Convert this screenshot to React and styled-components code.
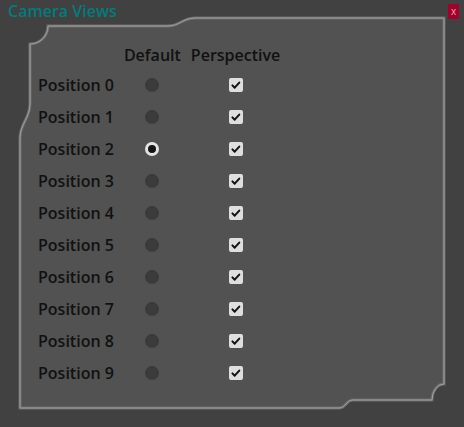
import React from "react";
import styled, { createGlobalStyle } from "styled-components";

const GlobalStyle = createGlobalStyle`
  html, body {
    margin: 0;
    padding: 0;
    background: #414141;
  }
  body {
    font-family: "Open Sans", "Noto Sans", sans-serif;
  }
`;

const Window = styled.div`
  position: relative;
  width: 464px;
  height: 427px;
  background: #414141;
  overflow: hidden;
`;

const Frame = styled.svg`
  position: absolute;
  inset: 0;
  z-index: 0;
`;

const TitleBar = styled.div`
  position: relative;
  z-index: 1;
  display: flex;
  justify-content: space-between;
  align-items: flex-start;
  height: 22px;
  padding: 0 5px 0 8px;
`;

const Title = styled.div`
  font-size: 16px;
  font-weight: 600;
  line-height: 22px;
  color: #007d7d;
`;

const CloseButton = styled.button`
  margin-top: 4px;
  width: 11px;
  height: 15px;
  padding: 0;
  border: none;
  background: #a3002b;
  color: #f2a8b8;
  font-family: "Open Sans", sans-serif;
  font-size: 10px;
  line-height: 13px;
  cursor: pointer;
`;

const Table = styled.div`
  position: relative;
  z-index: 1;
  display: grid;
  grid-template-columns: auto auto auto;
  grid-template-rows: 28px repeat(10, 32px);
  column-gap: 10px;
  align-items: center;
  width: max-content;
  margin: 19px 0 0 38px;
`;

const Header = styled.div`
  font-size: 16px;
  font-weight: 600;
  line-height: 22px;
  color: #111;
  justify-self: center;
`;

const Label = styled.div`
  font-size: 16px;
  font-weight: 600;
  line-height: 22px;
  color: #111;
`;

const Radio = styled.div`
  justify-self: center;
  width: 14px;
  height: 14px;
  border-radius: 50%;
  box-sizing: border-box;
  background: ${(p) => (p.$checked ? "#151515" : "#3b3b3b")};
  border: ${(p) => (p.$checked ? "3px solid #e4e4e4" : "none")};
`;

const Check = styled.div`
  justify-self: center;
  width: 14px;
  height: 14px;
  border-radius: 2px;
  background: #dedede;
  display: flex;
  align-items: center;
  justify-content: center;
`;

const rows = Array.from({ length: 10 }, (_, i) => ({
  name: `Position ${i}`,
  isDefault: i === 2,
  perspective: true,
}));

const outline =
  "M48 26 L168 26 C180 26 182 18 196 18 L444 18 L444 384 A12 16 0 0 0 432 400 " +
  "L353 400 C346 400 346 408 339 408 L20 408 L20 138 C20 124 30 118 30 104 " +
  "L30 44 A18 18 0 0 0 48 26 Z";

function PanelFrame() {
  return (
    <Frame width="464" height="427" viewBox="0 0 464 427">
      <path d={outline} fill="#525252" stroke="#6c6c6c" strokeWidth="3" />
      <path d={outline} fill="none" stroke="#a2a2a2" strokeWidth="1" />
    </Frame>
  );
}

function CheckMark() {
  return (
    <svg width="14" height="14" viewBox="0 0 14 14">
      <path
        d="M3.4 7.4 L5.7 9.7 L10.3 4.6"
        fill="none"
        stroke="#111"
        strokeWidth="2"
        strokeLinecap="round"
        strokeLinejoin="round"
      />
    </svg>
  );
}

export default function App() {
  return (
    <>
      <GlobalStyle />
      <Window>
        <PanelFrame />
        <TitleBar>
          <Title>Camera Views</Title>
          <CloseButton>x</CloseButton>
        </TitleBar>
        <Table>
          <span />
          <Header>Default</Header>
          <Header>Perspective</Header>
          {rows.map((r) => (
            <React.Fragment key={r.name}>
              <Label>{r.name}</Label>
              <Radio $checked={r.isDefault} />
              <Check>{r.perspective && <CheckMark />}</Check>
            </React.Fragment>
          ))}
        </Table>
      </Window>
    </>
  );
}
